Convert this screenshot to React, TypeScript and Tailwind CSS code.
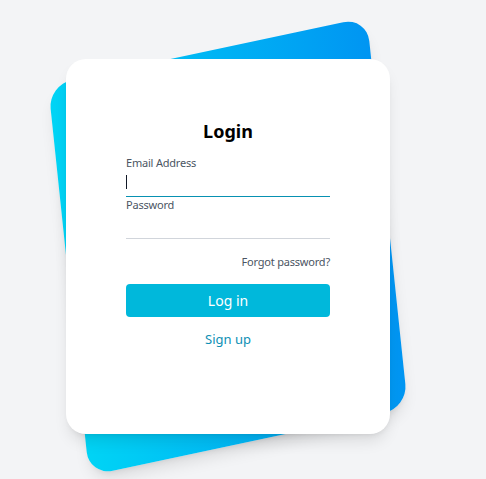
import React from "react";

export default function App() {
  return (
    <div className="min-h-screen w-full bg-[#f3f4f6] overflow-hidden" style={{ fontFamily: '"Noto Sans", "Open Sans", sans-serif' }}>
      <div className="relative ml-[66px] pt-[59px] w-[324px]">
        <div className="relative w-[324px] h-[375px]">
          <div className="absolute left-0 right-0 top-[-9px] bottom-[-9px] rounded-3xl bg-gradient-to-r from-[#00d4f5] to-[#0095f2] shadow-lg -skew-y-6 -rotate-6"></div>
          <div className="relative h-full rounded-[20px] bg-white shadow-lg px-[60px] pt-[60px]">
            <h1 className="text-center text-[18px] font-bold text-black leading-[24px]">Login</h1>
            <div className="mt-[12px]">
              <label className="block text-[11px] tracking-[-0.2px] text-[#4b5563] leading-[16px]">Email Address</label>
              <div className="relative h-[26px] border-b border-[#0891b2]">
                <span className="absolute left-0 top-[4px] h-[14px] w-px bg-[#111827]"></span>
              </div>
            </div>
            <div className="mt-0">
              <label className="block text-[11px] tracking-[-0.2px] text-[#4b5563] leading-[16px]">Password</label>
              <div className="h-[26px] border-b border-[#d1d5db]"></div>
            </div>
            <div className="mt-[15px] text-right text-[11px] tracking-[-0.2px] text-[#4b5563] leading-[16px]">Forgot password?</div>
            <button className="mt-[14px] w-full h-[33px] rounded bg-[#00b8db] text-white text-[14px]">Log in</button>
            <div className="mt-[13px] text-center text-[13px] text-[#0e8fb5] leading-[18px]">Sign up</div>
          </div>
        </div>
      </div>
    </div>
  );
}
